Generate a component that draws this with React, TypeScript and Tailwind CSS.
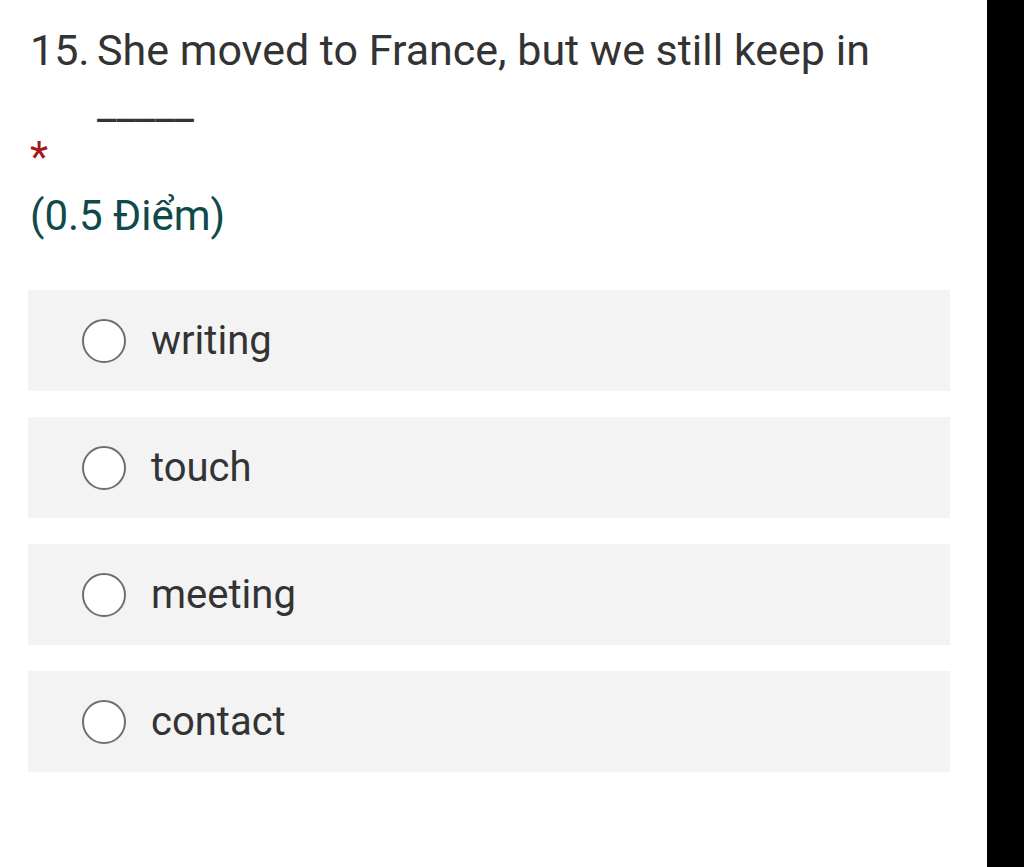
import React from "react";

const options = ["writing", "touch", "meeting", "contact"];

export default function App() {
  return (
    <div className="flex h-[867px] w-[1024px] bg-black" style={{ fontFamily: "Roboto, 'Noto Sans', sans-serif" }}>
      <div className="w-[987px] h-full bg-white pl-[30px] pr-[37px]">
        <div className="flex pt-[23px] text-[43px] leading-[54px] text-[#333333]">
          <span className="w-[67px] shrink-0">15.</span>
          <span>
            She moved to France, but we still keep in
            <br />
            _____
          </span>
        </div>
        <div className="mt-[6px] text-[42px] leading-[40px] text-[#a51717]">*</div>
        <div className="mt-[14px] text-[42px] leading-[50px] text-[#0f4a4a]">(0.5 Điểm)</div>
        <div className="mt-[49px] ml-[-2px] flex flex-col gap-[26px]">
          {options.map((o) => (
            <div key={o} className="flex h-[101px] items-center bg-[#f3f3f3] pl-[54px]">
              <span className="h-[44px] w-[44px] shrink-0 rounded-full border-[2.5px] border-[#6e6e6e] bg-white" />
              <span className="ml-[25px] text-[40px] text-[#333333]">{o}</span>
            </div>
          ))}
        </div>
      </div>
    </div>
  );
}
